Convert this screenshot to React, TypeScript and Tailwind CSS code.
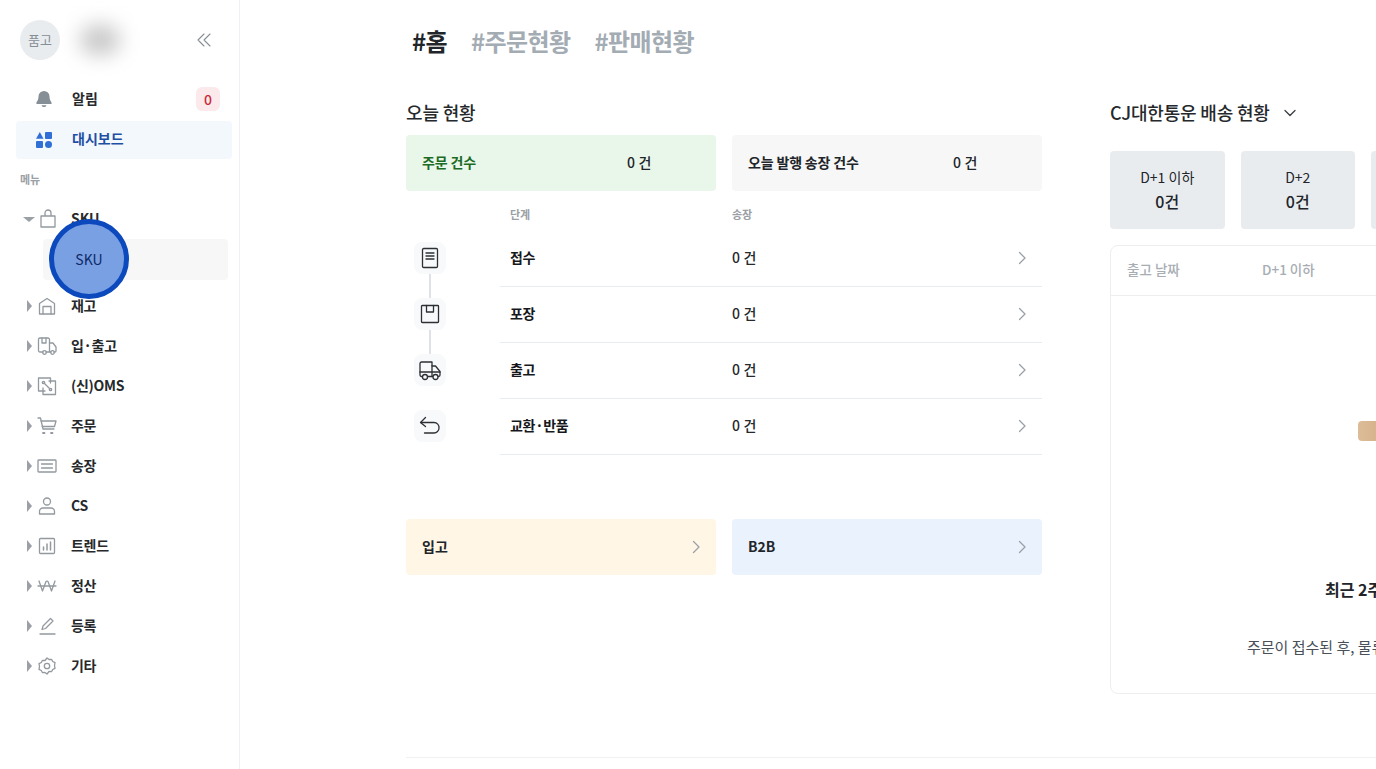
import React from "react";

const FONT = "font-['Noto_Sans_CJK_KR','Noto_Sans',sans-serif]";

type IconProps = { children: React.ReactNode };
const MenuSvg = ({ children }: IconProps) => (
  <svg width="20" height="20" viewBox="0 0 20 20" fill="none" stroke="#93999f" strokeWidth="1.3" strokeLinecap="round" strokeLinejoin="round">
    {children}
  </svg>
);

const menuIcons: Record<string, React.ReactNode> = {
  재고: (
    <MenuSvg>
      <path d="M2.500 18V7.500L10 2.500l7.500 5V18z" />
      <path d="M6 18V10.500h8V18" />
    </MenuSvg>
  ),
  "입·출고": (
    <MenuSvg>
      <path d="M6 16H3a1.500 1.500 0 0 1-1.500-1.500V3.500A1.500 1.500 0 0 1 3 2h8a1.500 1.500 0 0 1 1.500 1.500V16H9" />
      <path d="M12.500 7H16l3 4v4a1 1 0 0 1-1 1h-1M13 16h1" />
      <circle cx="7.500" cy="16.500" r="1.800" />
      <circle cx="15.500" cy="16.500" r="1.800" />
      <path d="M5 2v5h4V2" />
    </MenuSvg>
  ),
  "(신)OMS": (
    <MenuSvg>
      <path d="M8 15H1.500V2h12v5" />
      <path d="M12 5H18.500V18.500H6V12" />
      <path d="M7 7l6 6" />
      <circle cx="6.500" cy="6.500" r="1.200" />
      <circle cx="13.500" cy="13.500" r="1.200" />
    </MenuSvg>
  ),
  주문: (
    <MenuSvg>
      <path d="M1 2h2.500l2.500 11h11" />
      <path d="M4 5h15l-1.500 5.500H5.200" />
      <path d="M6 17h1.500M14 17h1.500" strokeWidth="1.800" />
    </MenuSvg>
  ),
  송장: (
    <MenuSvg>
      <rect x="1" y="4" width="18" height="12" rx="0.800" />
      <path d="M4.500 8h11M4.500 12h11" />
    </MenuSvg>
  ),
  CS: (
    <MenuSvg>
      <circle cx="10" cy="5.500" r="3.500" />
      <path d="M2.500 18v-2.500A3.500 3.500 0 0 1 6 12h8a3.500 3.500 0 0 1 3.500 3.500V18z" />
    </MenuSvg>
  ),
  트렌드: (
    <MenuSvg>
      <rect x="2.500" y="2.500" width="15" height="15" rx="1" />
      <path d="M6.500 14v-3M10 14V8M13.500 14V6" strokeWidth="1.500" />
    </MenuSvg>
  ),
  정산: (
    <MenuSvg>
      <path d="M1 10h18" />
      <path d="M2 5l3.500 10L9 5.500 10 5l1 .5L14.500 15 18 5" />
    </MenuSvg>
  ),
  등록: (
    <MenuSvg>
      <path d="M3 18h15" />
      <path d="M5 13.500l1-3.500 7.500-7.500 2.500 2.500-7.500 7.500z" />
    </MenuSvg>
  ),
  기타: (
    <MenuSvg>
      <path d="M10 2l2 1.500 2.500-.2 1.200 2.200 2.300 1.200-.5 2.800.5 2.800-2.300 1.200-1.200 2.200-2.500-.2L10 18l-2-1.500-2.500.2-1.200-2.200L2 13.300l.5-2.800L2 7.700l2.300-1.200 1.200-2.200 2.500.2z" />
      <circle cx="10" cy="10" r="2.700" />
    </MenuSvg>
  ),
};

const menu = ["재고", "입·출고", "(신)OMS", "주문", "송장", "CS", "트렌드", "정산", "등록", "기타"];

const Caret = ({ open }: { open?: boolean }) =>
  open ? (
    <span className="w-0 h-0 border-x-[6px] border-x-transparent border-t-[5px] border-t-[#9aa0a6]" />
  ) : (
    <span className="w-0 h-0 border-y-[6px] border-y-transparent border-l-[5px] border-l-[#9aa0a6]" />
  );

const Chevron = () => (
  <svg width="16" height="16" viewBox="0 0 16 16" fill="none" stroke="#9aa0a6" strokeWidth="1.300" strokeLinecap="round" strokeLinejoin="round">
    <path d="M5.500 2.500L11 8l-5.500 5.500" />
  </svg>
);

const MenuRow = ({ label }: { label: string }) => (
  <div className="h-10 flex items-center">
    <div className="w-[43px] pl-[27px] flex-none flex items-center"><Caret /></div>
    <div className="w-[28px] flex-none flex items-center -ml-[6px] mr-[6px]">{menuIcons[label]}</div>
    <span className="-mt-[2px] text-[14px] font-semibold text-[#26292c] tracking-[-0.02em]">{label}</span>
  </div>
);

const Sidebar = () => (
  <aside className="w-[240px] flex-none h-full border-r border-[#eef0f2] relative">
    <div className="h-[79px] pt-5 pl-5 pr-[27px] flex items-start justify-between">
      <div className="flex items-center">
        <div className="w-10 h-10 rounded-full bg-[#e9ecef] flex items-center justify-center text-[13px] text-[#868e96]">품고</div>
        <div className="ml-[20px] w-[40px] h-[30px] rounded-full bg-[#c8c8c8] blur-[10px]" />
      </div>
      <svg className="mt-[12px]" width="16" height="16" viewBox="0 0 16 16" fill="none" stroke="#868e96" strokeWidth="1.100" strokeLinecap="round" strokeLinejoin="round">
        <path d="M8 2L2 8l6 6M14 2L8 8l6 6" />
      </svg>
    </div>
    <div className="h-10 ml-4 mr-2 pl-[20px] pr-3 flex items-center justify-between">
      <div className="flex items-center">
        <svg width="16" height="18" viewBox="0 0 16 18" fill="#868e96">
          <path d="M8 1a5.500 5.500 0 0 0-5.500 5.500c0 4-2.200 5.500-2.200 6.500 0 .6.400 1 1 1h13.400c.6 0 1-.4 1-1 0-1-2.200-2.500-2.200-6.500A5.500 5.500 0 0 0 8 1z" />
          <path d="M5.500 15.200a2.600 2.600 0 0 0 5 0z" />
        </svg>
        <span className="-mt-[2px] ml-[20px] text-[14px] font-semibold text-[#26292c]">알림</span>
      </div>
      <span className="w-6 h-6 mr-[-1px] rounded-md bg-[#fbe9eb] flex items-center justify-center text-[14px] font-medium text-[#c92a3a]">0</span>
    </div>
    <div className="h-[38px] mt-[2px] ml-4 mr-[7px] pl-[20px] rounded bg-[#f3f8fd] flex items-center">
      <svg width="16" height="16" viewBox="0 0 16 16" fill="#2f6fd6">
        <path d="M3.800 0L7.500 6.800H0z" />
        <rect x="9" y="0" width="7" height="7" rx="1" />
        <rect x="0" y="9" width="7" height="7" rx="1" />
        <circle cx="12.500" cy="12.500" r="3.500" />
      </svg>
      <span className="-mt-[4px] ml-[20px] text-[14px] font-semibold text-[#1f4fa3]">대시보드</span>
    </div>
    <div className="h-[40px] pl-5 flex items-center text-[11px] font-semibold text-[#9aa0a6]">메뉴</div>
    <div className="h-[40px] flex items-center">
      <div className="w-[40px] pl-[23px] flex-none flex items-center"><Caret open /></div>
      <svg className="-ml-[1px] mr-[14px]" width="18" height="20" viewBox="0 0 18 20" fill="none" stroke="#93999f" strokeWidth="1.300" strokeLinejoin="round">
        <path d="M2 7h14v11H2z" />
        <path d="M6 7V4a3 3 0 0 1 6 0v3" />
      </svg>
      <span className="-mt-[2px] text-[14px] font-semibold text-[#26292c]">SKU</span>
    </div>
    <div className="ml-[43px] mr-[11px] h-[41px] rounded bg-[#f7f7f7] flex items-center pl-[33px] text-[14px] text-[#26292c]">SKU</div>
    <div className="mt-[6px]">
      {menu.map((m) => (
        <MenuRow key={m} label={m} />
      ))}
    </div>
    <div className="absolute left-[49px] top-[219px] w-20 h-20 rounded-full border-[5px] border-[#0b49bd] bg-[#7aa0e4] flex items-center justify-center text-[14px] text-[#0c2a66]">SKU</div>
  </aside>
);

const IconBox = ({ children }: IconProps) => (
  <div className="w-8 h-8 rounded-lg bg-[#f8f9fa] flex items-center justify-center">{children}</div>
);

const StepSvg = ({ children }: IconProps) => (
  <svg width="22" height="22" viewBox="0 0 22 22" fill="none" stroke="#2c3035" strokeWidth="1.300" strokeLinecap="round" strokeLinejoin="round">
    {children}
  </svg>
);

const steps: { label: string; icon: React.ReactNode; line?: boolean }[] = [
  {
    label: "접수",
    line: true,
    icon: (
      <StepSvg>
        <rect x="3.500" y="1.500" width="15" height="19" rx="1.200" />
        <path d="M7 6h8M7 9h8M7 12h8" />
      </StepSvg>
    ),
  },
  {
    label: "포장",
    line: true,
    icon: (
      <StepSvg>
        <rect x="2.500" y="2.500" width="17" height="17" rx="0.800" />
        <path d="M7.500 2.500V9h7V2.500" />
      </StepSvg>
    ),
  },
  {
    label: "출고",
    icon: (
      <StepSvg>
        <path d="M3 17.500H2.500A1.500 1.500 0 0 1 1 16V4.500A1.500 1.500 0 0 1 2.500 3h10.500v14.500H9" />
        <path d="M13 7h3.500l4.500 5.500V16a1.500 1.500 0 0 1-1.500 1.500H19.500M13 17.500h.500" />
        <path d="M1 13h20" />
        <circle cx="6" cy="18" r="2.500" />
        <circle cx="16.500" cy="18" r="2.500" />
      </StepSvg>
    ),
  },
  {
    label: "교환·반품",
    icon: (
      <StepSvg>
        <path d="M6.500 2.500L1.500 7.500l5 4" />
        <path d="M2 7.500h13a5 5 0 0 1 5 5.500 5 5 0 0 1-5 5H5.500" />
      </StepSvg>
    ),
  },
];

const Summary = ({ label, bg, labelClass }: { label: string; bg: string; labelClass: string }) => (
  <div className={`h-14 rounded flex items-center pl-4 text-[14px] font-semibold ${bg}`}>
    <span className={`-mt-[2px] w-[205px] tracking-[-0.012em] ${labelClass}`}>{label}</span>
    <span className="-mt-[2px] text-[14px] font-medium text-[#212529] tracking-[0.01em]">0 건</span>
  </div>
);

const LeftColumn = () => (
  <div className="w-[636px] flex-none">
    <h2 className="h-[38px] pt-[2px] text-[18px] leading-[27px] font-medium text-[#26292c] tracking-[-0.01em]">오늘 현황</h2>
    <div className="grid grid-cols-2 gap-4">
      <Summary label="주문 건수" bg="bg-[#e9f6ea]" labelClass="text-[#1b6b24]" />
      <Summary label="오늘 발행 송장 건수" bg="bg-[#f7f7f7]" labelClass="text-[#212529]" />
    </div>
    <div className="h-[40px] pt-[6px] flex items-center text-[11px] font-semibold text-[#9aa0a6]">
      <span className="ml-[104px] w-[222px]">단계</span>
      <span>송장</span>
    </div>
    <div>
      {steps.map((s) => (
        <div key={s.label} className="h-14 flex">
          <div className="w-[94px] flex-none pl-2 pt-[11px]">
            <IconBox>{s.icon}</IconBox>
            {s.line && <div className="ml-[15px] w-[2px] h-6 bg-[#dee2e6]" />}
          </div>
          <div className="flex-1 flex items-center border-b border-[#e9ecef] text-[14px] -mt-px">
            <span className="-mt-[2px] w-[232px] pl-[10px] font-semibold text-[#16181b] tracking-[-0.02em]">{s.label}</span>
            <span className="-mt-[2px] font-medium text-[#26292c] tracking-[0.01em]">0 건</span>
            <span className="ml-auto mr-[12px]"><Chevron /></span>
          </div>
        </div>
      ))}
    </div>
    <div className="mt-[64px] grid grid-cols-2 gap-4">
      <div className="h-14 rounded bg-[#fff6e6] flex items-center justify-between pl-4 pr-3 text-[14px] font-semibold text-[#212529]">
        <span className="-mt-[2px]">입고</span>
        <Chevron />
      </div>
      <div className="h-14 rounded bg-[#eaf2fd] flex items-center justify-between pl-4 pr-3 text-[14px] font-semibold text-[#212529]">
        <span className="-mt-[2px]">B2B</span>
        <Chevron />
      </div>
    </div>
  </div>
);

const DCard = ({ title }: { title: string }) => (
  <div className="w-[114.500px] h-[78px] flex-none rounded bg-[#e9ecef] flex flex-col items-center justify-center text-[#212529]">
    <span className="text-[14px] leading-[22px]">{title}</span>
    <span className="text-[16px] leading-[26px] font-medium">0건</span>
  </div>
);

const RightColumn = () => (
  <div className="ml-[68px] w-[500px] flex-none">
    <div className="h-[44px] -mt-[4px] pb-[6px] flex items-center text-[18px] font-medium text-[#26292c] tracking-[-0.01em]">
      CJ대한통운 배송 현황
      <svg className="ml-[12px] mt-[2px]" width="16" height="16" viewBox="0 0 16 16" fill="none" stroke="#3a3f44" strokeWidth="1.300" strokeLinecap="round" strokeLinejoin="round">
        <path d="M3 5.500l5 5 5-5" />
      </svg>
    </div>
    <div className="mt-[14px] flex gap-4">
      <DCard title="D+1 이하" />
      <DCard title="D+2" />
      <DCard title="D+3" />
    </div>
    <div className="mt-4 h-[449px] rounded-lg border border-[#eceef0] flex flex-col">
      <div className="h-[50px] flex-none flex items-center border-b border-[#eceef0] text-[13.500px] font-medium text-[#a7adb3]">
        <span className="-mt-[2px] ml-4 w-[135px]">출고 날짜</span>
        <span className="-mt-[2px]">D+1 이하</span>
      </div>
      <div className="flex-1 whitespace-nowrap">
        <div className="ml-[247px] mt-[125px] w-[40px] h-[20px] rounded-sm bg-gradient-to-r from-[#dcbd99] to-[#cfa77c]" />
        <div className="ml-[214px] mt-[136px] text-[16px] leading-[24px] font-semibold text-[#212529]">최근 2주 배송 현황이 없습니다</div>
        <div className="ml-[136px] mt-[35px] text-[15px] leading-[22px] text-[#495057]">주문이 접수된 후, 물류센터에서 출고되면 확인할 수 있습니다</div>
      </div>
    </div>
  </div>
);

export default function App() {
  return (
    <div className={`${FONT} w-[1376px] h-[769px] overflow-hidden bg-white flex`}>
      <Sidebar />
      <main className="flex-1 min-w-0 pl-[166px]">
        <nav className="h-[97px] pt-[23px] pl-[6px] flex items-start gap-[24px] text-[24px] leading-[36px] font-semibold text-[#a3abb3] tracking-[-0.025em]">
          <span className="text-[#212529]">#홈</span>
          <span>#주문현황</span>
          <span>#판매현황</span>
        </nav>
        <div className="flex h-[661px] border-b border-[#eef0f2] w-[1200px]">
          <LeftColumn />
          <RightColumn />
        </div>
      </main>
    </div>
  );
}
